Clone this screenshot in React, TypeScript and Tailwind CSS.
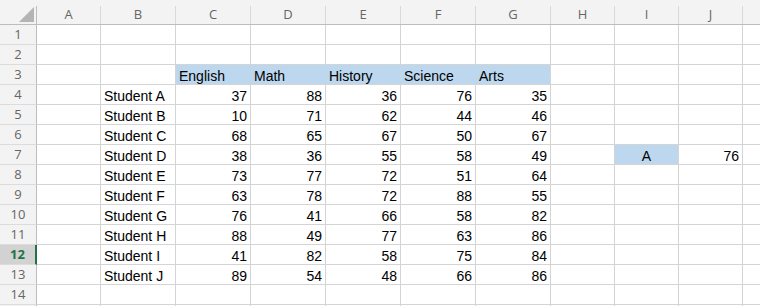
const cols = ["A", "B", "C", "D", "E", "F", "G", "H", "I", "J", ""];
const widths = ["w-[64px]", "w-[75px]", "w-[75px]", "w-[75px]", "w-[75px]", "w-[75px]", "w-[75px]", "w-[64px]", "w-[64px]", "w-[64px]", "w-[64px]"];

type Cell = { v: string | number; align?: "l" | "r" | "c"; blue?: boolean; blueJoin?: boolean };

const students: [string, number[]][] = [
  ["Student A", [37, 88, 36, 76, 35]],
  ["Student B", [10, 71, 62, 44, 46]],
  ["Student C", [68, 65, 67, 50, 67]],
  ["Student D", [38, 36, 55, 58, 49]],
  ["Student E", [73, 77, 72, 51, 64]],
  ["Student F", [63, 78, 72, 88, 55]],
  ["Student G", [76, 41, 66, 58, 82]],
  ["Student H", [88, 49, 77, 63, 86]],
  ["Student I", [41, 82, 58, 75, 84]],
  ["Student J", [89, 54, 48, 66, 86]],
];

function buildRows(): Record<number, Record<number, Cell>> {
  const rows: Record<number, Record<number, Cell>> = {};
  // row 3: subject headers
  const subjects = ["English", "Math", "History", "Science", "Arts"];
  rows[3] = {};
  subjects.forEach((s, i) => {
    rows[3][2 + i] = { v: s, align: "l", blue: true, blueJoin: i < 4 };
  });
  students.forEach(([name, scores], i) => {
    const r: Record<number, Cell> = { 1: { v: name, align: "l" } };
    scores.forEach((n, j) => (r[2 + j] = { v: n, align: "r" }));
    rows[4 + i] = r;
  });
  rows[7][8] = { v: "A", align: "c", blue: true };
  rows[7][9] = { v: 76, align: "r" };
  return rows;
}

const data = buildRows();

function GridCell({ cell, width }: { cell?: Cell; width: string }) {
  const align =
    cell?.align === "r" ? "justify-end pr-[3px]" : cell?.align === "c" ? "justify-center" : "justify-start pl-[3px]";
  const bg = cell?.blue ? "bg-[#bdd7ee]" : "bg-white";
  const br = cell?.blueJoin ? "border-r-[#bdd7ee]" : "border-r-[#d4d4d4]";
  return (
    <div
      className={`${width} shrink-0 h-[20px] box-border border-r border-b border-b-[#d4d4d4] ${br} ${bg} flex items-center ${align} overflow-hidden whitespace-nowrap text-[14px] leading-none text-black pt-[2px]`}
    >
      {cell ? cell.v : ""}
    </div>
  );
}

export default function App() {
  return (
    <div className="w-[760px] h-[306px] overflow-hidden bg-white font-['Liberation_Sans',Arial,sans-serif]">
      {/* Column headers */}
      <div className="flex h-[25px] bg-[#f3f3f3] border-b border-[#bdbdbd] box-border">
        <div className="w-[37px] shrink-0 flex flex-col">
          <div className="h-[6px]" />
          <div className="h-[18px] border-r border-[#bdbdbd] relative">
            <div className="absolute right-[2px] bottom-[2px] w-0 h-0 border-l-[15px] border-l-transparent border-b-[15px] border-b-[#b4b4b4]" />
          </div>
        </div>
        {cols.map((c, i) => (
          <div key={i} className={`${widths[i]} shrink-0 flex flex-col`}>
            <div className="h-[6px]" />
            <div className="h-[18px] border-r border-[#d9d9d9] flex items-center justify-center text-[13px] text-[#666] font-['Open_Sans',sans-serif]">
              {c}
            </div>
          </div>
        ))}
      </div>

      {/* Rows */}
      {Array.from({ length: 15 }, (_, k) => k + 1).map((r) => {
        const sel = r === 12;
        return (
          <div key={r} className="flex">
            <div
              className={`w-[37px] shrink-0 h-[20px] box-border border-b border-b-[#dcdcdc] flex items-center justify-center text-[13px] font-['Open_Sans',sans-serif] ${
                sel
                  ? "bg-[#d2d2d2] text-[#217346] font-bold border-r-2 border-r-[#217346]"
                  : "bg-[#f3f3f3] text-[#666] border-r border-r-[#bdbdbd]"
              }`}
            >
              {r <= 14 ? r : ""}
            </div>
            {cols.map((c, i) => (
              <GridCell key={i} width={widths[i]} cell={data[r]?.[i]} />
            ))}
          </div>
        );
      })}
    </div>
  );
}
